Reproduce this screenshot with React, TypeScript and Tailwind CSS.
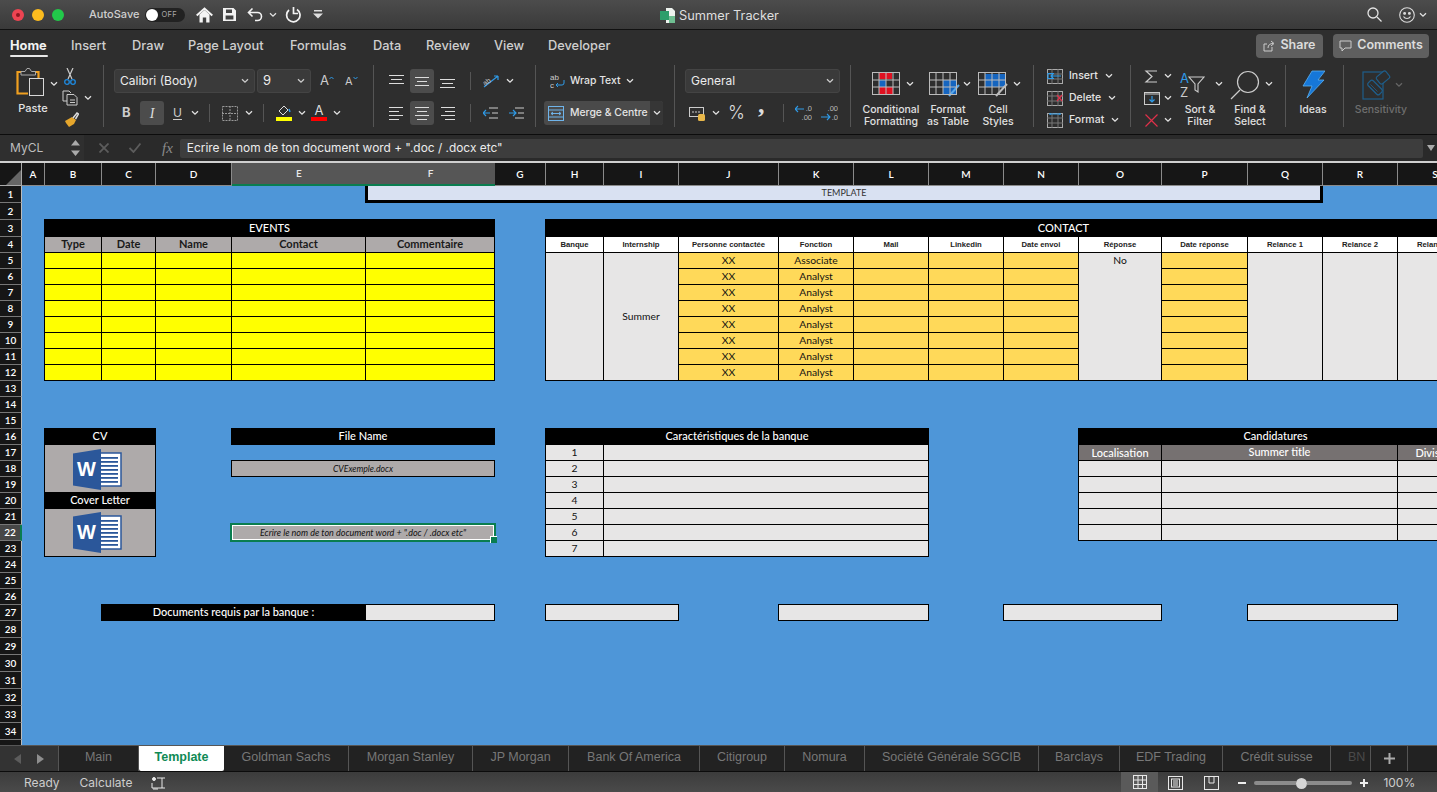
import React from "react";

const COL: Record<string, string> = {
  A: "col-start-2", B: "col-start-3", C: "col-start-4", D: "col-start-5", E: "col-start-6", F: "col-start-7", G: "col-start-8",
  H: "col-start-9", I: "col-start-10", J: "col-start-11", K: "col-start-12", L: "col-start-13", M: "col-start-14", N: "col-start-15",
  O: "col-start-16", P: "col-start-17", Q: "col-start-18", R: "col-start-19", S: "col-start-20", T: "col-start-21",
};
const ROW = ["row-start-1", "row-start-2", "row-start-3", "row-start-4", "row-start-5", "row-start-6", "row-start-7", "row-start-8", "row-start-9", "row-start-10", "row-start-11", "row-start-12", "row-start-13", "row-start-14", "row-start-15", "row-start-16", "row-start-17", "row-start-18", "row-start-19", "row-start-20", "row-start-21", "row-start-22", "row-start-23", "row-start-24", "row-start-25", "row-start-26", "row-start-27", "row-start-28", "row-start-29", "row-start-30", "row-start-31", "row-start-32", "row-start-33", "row-start-34", "row-start-35", "row-start-36"];
const CS = ["", "col-span-1", "col-span-2", "col-span-3", "col-span-4", "col-span-5", "col-span-6", "col-span-7", "col-span-8", "col-span-9", "col-span-10", "col-span-11", "col-span-12", "col-span-13"];
const RS = ["", "row-span-1", "row-span-2", "row-span-3", "row-span-4", "row-span-5", "row-span-6", "row-span-7", "row-span-8"];

const Cell = ({ c, r, cs = 1, rs = 1, className = "", children }: { c: string; r: number; cs?: number; rs?: number; className?: string; children?: React.ReactNode }) => (
  <div className={`${COL[c]} ${ROW[r]} ${CS[cs]} ${RS[rs]} -ml-px -mt-px border border-black flex items-center justify-center overflow-hidden whitespace-nowrap min-w-0 ${className}`}>{children}</div>
);

const Chev = ({ className = "", color = "#e2e2e2" }: { className?: string; color?: string }) => (
  <svg width="8" height="6" viewBox="0 0 8 6" className={`shrink-0 ${className}`} fill="none"><path d="M1 1.2l3 3 3-3" stroke={color} strokeWidth="1.3" /></svg>
);
const Lines = ({ rows, w = 16, h = 16, color = "#dcdcdc" }: { rows: number[][]; w?: number; h?: number; color?: string }) => (
  <svg width={w} height={h} viewBox={`0 0 ${w} ${h}`} className="shrink-0">
    {rows.map((l, i) => <rect key={i} x={l[0]} y={l[2]} width={l[1] - l[0]} height="1" fill={color} />)}
  </svg>
);

const WordIcon = () => (
  <svg width="49" height="41" viewBox="0 0 49 41" className="-translate-x-[3px]">
    <rect x="26" y="4" width="22" height="33" fill="#fff" stroke="#2b579a" strokeWidth="1.5" />
    {[8, 12, 16, 20, 24, 28, 32].map((y) => <rect key={y} x="28" y={y} width="17" height="1.8" fill="#2b579a" />)}
    <path d="M0 4.5L28 0v41L0 36.5z" fill="#2b579a" />
    <text x="13.5" y="27" textAnchor="middle" fontFamily="Liberation Sans" fontWeight="700" fontSize="20" fill="#fff">W</text>
  </svg>
);

const ColHead = () => {
  const cols = "ABCDEFGHIJKLMNOPQRST".split("");
  return (
    <>
      <div className="col-start-1 row-start-1 bg-[#161616] border-r border-b border-[#aaa] flex items-end justify-end relative z-10">
        <svg width="15" height="15" viewBox="0 0 15 15"><path d="M15 0v15H0z" fill="#666" /></svg>
      </div>
      {cols.map((l) => {
        const sel = l === "E" || l === "F";
        return (
          <div key={l} className={`${COL[l]} row-start-1 relative z-10 flex items-center justify-center text-[10px] font-semibold ${sel ? "bg-[#565656] text-[#e8e8e8] border-b-2 border-[#0a7d50]" : "bg-[#161616] text-white border-r border-b border-[#8a8a8a]"}`}>{l}</div>
        );
      })}
      {Array.from({ length: 35 }, (_, i) => i + 1).map((n) => (
        <div key={n} className={`col-start-1 ${ROW[n]} flex items-center justify-center text-[10px] font-semibold text-white border-b border-[#777] ${n === 22 ? "bg-[#474747] border-r-2 border-r-[#0a7d50]" : "bg-[#161616] border-r border-r-[#bbb]"}`}>{n}</div>
      ))}
    </>
  );
};

const Sheet = () => {
  const rows58 = [5, 6, 7, 8, 9, 10, 11, 12];
  const ev = ["B", "C", "D", "E", "F"];
  const evH = ["Type", "Date", "Name", "Contact", "Commentaire"];
  const ctH: [string, string][] = [["H", "Banque"], ["I", "Internship"], ["J", "Personne contactée"], ["K", "Fonction"], ["L", "Mail"], ["M", "Linkedin"], ["N", "Date envoi"], ["O", "Réponse"], ["P", "Date réponse"], ["Q", "Relance 1"], ["R", "Relance 2"], ["S", "Relance 3"]];
  const lg = "bg-[#e7e6e6]";
  const gold = "bg-[#ffd959]";
  const head = "bg-black text-white text-[11px] font-medium";
  return (
    <div className="grid h-[582px] overflow-hidden bg-[#4e96d8] font-[Lato,sans-serif] grid-cols-[22px_23px_57px_54px_76px_134px_129px_51px_58px_75px_100px_75px_75px_75px_75px_83px_86px_75px_75px_75px_109px] grid-rows-[23px_17px_17px_17px_repeat(24,16px)_repeat(8,17px)] text-[#111]">
      <ColHead />

      <div className={`${COL.F} row-start-2 col-span-12 -ml-px border-x-[3px] border-b-[3px] border-black bg-[#d9e1f2] flex items-center justify-center text-[9px] text-[#333]`}>TEMPLATE</div>

      <Cell c="B" r={3} cs={5} className={`${head} -ml-[2px]`}>EVENTS</Cell>
      {ev.map((c, i) => <Cell key={c} c={c} r={4} className="bg-[#aeaaaa] text-[11px] font-bold text-[#1a1a1a]">{evH[i]}</Cell>)}
      {rows58.map((r) => ev.map((c) => <Cell key={c + r} c={c} r={r} className="bg-[#ffff00]" />))}

      <Cell c="H" r={3} cs={13} className={head}>CONTACT</Cell>
      {ctH.map(([c, t]) => <Cell key={c} c={c} r={4} className="bg-white font-[Liberation_Sans,sans-serif] font-bold text-[7.7px] text-[#222]">{t}</Cell>)}
      <Cell c="H" r={5} rs={8} className={lg} />
      <Cell c="I" r={5} rs={8} className={`${lg} text-[10.3px]`}>Summer</Cell>
      {rows58.map((r) => (
        <React.Fragment key={r}>
          <Cell c="J" r={r} className={`${gold} text-[10.3px]`}>XX</Cell>
          <Cell c="K" r={r} className={`${gold} text-[10.3px]`}>{r === 5 ? "Associate" : "Analyst"}</Cell>
          <Cell c="L" r={r} className={gold} />
          <Cell c="M" r={r} className={gold} />
          <Cell c="N" r={r} className={gold} />
          <Cell c="P" r={r} className={gold} />
        </React.Fragment>
      ))}
      <Cell c="O" r={5} rs={8} className={`${lg} text-[10.3px] !items-start`}>No</Cell>
      <Cell c="Q" r={5} rs={8} className={lg} />
      <Cell c="R" r={5} rs={8} className={lg} />
      <Cell c="S" r={5} rs={8} className={lg} />

      <Cell c="B" r={16} cs={2} className={head}>CV</Cell>
      <Cell c="B" r={17} cs={2} rs={3} className="bg-[#aeaaaa] border-b-0"><WordIcon /></Cell>
      <Cell c="B" r={20} cs={2} className={head}>Cover Letter</Cell>
      <Cell c="B" r={21} cs={2} rs={3} className="bg-[#aeaaaa]"><WordIcon /></Cell>

      <Cell c="E" r={16} cs={2} className={head}>File Name</Cell>
      <Cell c="E" r={18} cs={2} className="bg-[#aeaaaa] italic text-[8.7px]">CVExemple.docx</Cell>
      <div className={`${COL.E} ${ROW[22]} col-span-2 -ml-[2px] -mt-[2px] -mr-px -mb-px border-2 border-[#0a7d50] relative z-[5]`}>
        <div className="h-full border border-white bg-[#aeaaaa] italic text-[9px] flex items-center justify-center whitespace-nowrap">Ecrire le nom de ton document word + ".doc / .docx etc"</div>
        <div className="absolute -right-[3px] -bottom-[3px] w-[7px] h-[7px] bg-[#0a7d50] border-t border-l border-white" />
      </div>

      <Cell c="H" r={16} cs={5} className={head}>Caractéristiques de la banque</Cell>
      {[1, 2, 3, 4, 5, 6, 7].map((n) => (
        <React.Fragment key={n}>
          <Cell c="H" r={16 + n} className={`${lg} text-[10.3px]`}>{n}</Cell>
          <Cell c="I" r={16 + n} cs={4} className={lg} />
        </React.Fragment>
      ))}

      <Cell c="O" r={16} cs={5} className={head}>Candidatures</Cell>
      <Cell c="O" r={17} className="bg-[#767171] text-white text-[11px] font-medium pt-px">Localisation</Cell>
      <Cell c="P" r={17} cs={3} className="bg-[#767171] text-white text-[11px] font-medium !items-start leading-[13px]">Summer title</Cell>
      <Cell c="S" r={17} className="bg-[#767171] text-white text-[11px] font-medium pt-px">Division</Cell>
      {[18, 19, 20, 21, 22].map((r) => (
        <React.Fragment key={r}>
          <Cell c="O" r={r} className={lg} />
          <Cell c="P" r={r} cs={3} className={lg} />
          <Cell c="S" r={r} className={lg} />
        </React.Fragment>
      ))}

      <Cell c="C" r={27} cs={3} className={head}>Documents requis par la banque :</Cell>
      <Cell c="F" r={27} className={lg} />
      <Cell c="H" r={27} cs={2} className={lg} />
      <Cell c="K" r={27} cs={2} className={lg} />
      <Cell c="N" r={27} cs={2} className={lg} />
      <Cell c="Q" r={27} cs={2} className={lg} />
    </div>
  );
};

const TitleBar = () => (
  <div className="h-[30px] flex items-center bg-gradient-to-b from-[#4c4c4c] to-[#3a3a3a] border-b border-[#111] relative">
    <div className="ml-[12px] flex gap-[8px]">
      <div className="w-[12px] h-[12px] rounded-full bg-[#ed4452] flex items-center justify-center"><div className="w-[4px] h-[4px] rounded-full bg-[#8e1620]" /></div>
      <div className="w-[12px] h-[12px] rounded-full bg-[#fdbc1e]" />
      <div className="w-[12px] h-[12px] rounded-full bg-[#22c94a]" />
    </div>
    <span className="ml-[25px] text-[11px] font-medium text-[#cfcfcf]">AutoSave</span>
    <div className="ml-[6px] w-[40px] h-[14px] rounded-full bg-[#222] flex items-center">
      <div className="w-[12px] h-[12px] rounded-full bg-white ml-px" />
      <span className="ml-[3px] text-[7.5px] tracking-wider text-[#aaa]">OFF</span>
    </div>
    <svg className="ml-[11px]" width="17" height="16" viewBox="0 0 17 16"><path d="M.7 8.500L8.500 1.500l7.800 7" fill="none" stroke="#f4f4f4" strokeWidth="2" /><path fillRule="evenodd" fill="#f4f4f4" d="M3.500 7.500L8.500 3l5 4.500V15.500h-3.300V10.500H6.800v5H3.500z" /></svg>
    <svg className="ml-[9px]" width="15" height="15" viewBox="0 0 15 15" fill="#f2f2f2"><path fillRule="evenodd" d="M1 1h10.500L14 3.500V14H1zM4 2.600V6h6V2.600zM3.600 8.500V12.600h7.800V8.500z" /></svg>
    <svg className="ml-[10px]" width="16" height="15" viewBox="0 0 16 15" fill="none" stroke="#f2f2f2" strokeWidth="1.600"><path d="M5.500 1.500L1.500 5.500l4 4M1.500 5.500h9a4 4 0 010 8H8" /></svg>
    <Chev className="ml-[6px]" />
    <svg className="ml-[7px]" width="17" height="17" viewBox="0 0 17 17" fill="none" stroke="#f2f2f2" strokeWidth="1.700"><path d="M5 4a6.700 6.700 0 108-.5" /><path d="M10.500 1v6.500H15" transform="translate(-1 0)" /></svg>
    <svg className="ml-[12px]" width="10" height="9" viewBox="0 0 10 9" fill="#ddd"><rect x="1" y="0" width="8" height="1.5" /><path d="M0 3.500h10L5 8.500z" /></svg>
    <div className="absolute left-[660px] top-[6px] flex items-center">
      <svg width="16" height="17" viewBox="0 0 16 17"><path d="M6 1h6l3 3v12H6z" fill="#eef3ef" /><rect x="9" y="9" width="6" height="7" fill="#6fbf92" /><rect x="0" y="4" width="9" height="9" fill="#2e9e6b" /></svg>
      <span className="ml-[3px] text-[12.8px] text-[#dedede]">Summer Tracker</span>
    </div>
    <svg className="ml-auto" width="15" height="15" viewBox="0 0 15 15" fill="none" stroke="#e4e4e4" strokeWidth="1.300"><circle cx="6" cy="6" r="5" /><path d="M10 10l4.500 4.500" /></svg>
    <svg className="ml-[17px]" width="16" height="16" viewBox="0 0 16 16" fill="none" stroke="#dcdcdc" strokeWidth="1.100"><circle cx="8" cy="8" r="7.300" /><circle cx="5.600" cy="6.400" r=".9" fill="#dcdcdc" /><circle cx="10.400" cy="6.400" r=".9" fill="#dcdcdc" /><path d="M4.500 9.500a4 4 0 007 0" /></svg>
    <Chev className="ml-[4px] mr-[10px]" />
  </div>
);

const tabs = [
  { t: "Insert", c: "w-[61px]" }, { t: "Draw", c: "w-[56px]" }, { t: "Page Layout", c: "w-[102px]" }, { t: "Formulas", c: "w-[83px]" },
  { t: "Data", c: "w-[53px]" }, { t: "Review", c: "w-[68px]" }, { t: "View", c: "w-[54px]" }, { t: "Developer", c: "w-[80px]" },
];

const TabRow = () => (
  <div className="h-[31px] flex items-center pl-[10px] pr-[8px] bg-[#2e2e2e] text-[12.8px] font-medium text-[#cfcfcf]">
    <div className="w-[61px] h-full relative flex items-center">
      <span className="font-bold text-[#f2f2f2]">Home</span>
      <div className="absolute left-0 top-[25px] w-[38px] h-[2px] rounded bg-[#e8e8e8]" />
    </div>
    {tabs.map((x) => <div key={x.t} className={`${x.c} shrink-0`}>{x.t}</div>)}
    <div className="ml-auto flex items-center gap-[10px] text-[#dcdcdc] font-semibold text-[12.5px]">
      <div className="w-[67px] h-[24px] rounded bg-[#5f5f5f] flex items-center justify-center gap-[5px]">
        <svg width="12" height="12" viewBox="0 0 12 12" fill="none" stroke="#ccc"><path d="M9 7v4H1V4h3M5 8c0-3 2-4.500 5-4.500M8 1l3 2.500L8 6" /></svg>Share
      </div>
      <div className="w-[96px] h-[24px] rounded bg-[#5f5f5f] flex items-center justify-center gap-[5px]">
        <svg width="13" height="12" viewBox="0 0 13 12" fill="none" stroke="#ccc"><path d="M1 1h11v7H6l-3 3V8H1z" /></svg>Comments
      </div>
    </div>
  </div>
);

const Drop = ({ label, className = "" }: { label: string; className?: string }) => (
  <div className={`h-[24px] rounded-[3px] bg-[#3a3a3a] border border-[#444] flex items-center pl-[5px] pr-[5px] justify-between text-[12px] text-[#ececec] ${className}`}>
    <span>{label}</span><Chev color="#ccc" />
  </div>
);

const GridIcon = ({ children, className = "" }: { children?: React.ReactNode; className?: string }) => (
  <svg width="32" height="26" viewBox="0 0 32 26" fill="none" className={`shrink-0 ${className}`}>
    {children}
    <g stroke="#bbb" strokeWidth="1"><rect x="0.5" y="0.500" width="27" height="22" /><path d="M0 8h28M0 15h28M7 0v23M14 0v23M21 0v23" /></g>
  </svg>
);

const Sep = () => <div className="w-px h-[18px] bg-[#555] shrink-0" />;

const Group = ({ w, children, last }: { w: string; children: React.ReactNode; last?: boolean }) => (
  <div className={`${w} shrink-0 h-[62px] flex items-start ${last ? "" : "border-r border-[#555]"}`}>{children}</div>
);

const Big = ({ lines, className = "", children }: { lines: string[]; className?: string; children: React.ReactNode }) => (
  <div className={`flex flex-col items-center shrink-0 ${className}`}>
    <div className="h-[39px] flex items-center">{children}</div>
    <div className="text-center text-[10.5px] leading-[12px] font-medium text-[#e0e0e0] whitespace-nowrap">{lines.map((l) => <div key={l}>{l}</div>)}</div>
  </div>
);

const Ribbon = () => (
  <div className="h-[74px] pt-[4px] flex bg-[#2e2e2e] border-b border-[#0c0c0c] text-[#e4e4e4]">
    <Group w="w-[104px]">
      <div className="ml-[16px] w-[34px] flex flex-col items-start">
        <svg className="mt-[2px]" width="30" height="30" viewBox="0 0 30 30" fill="none">
          <path d="M5 5H1.500v21.500H12M19 5h3.500v6" stroke="#f0a020" strokeWidth="2.200" />
          <path d="M5 8V4.500h4L11 1.500h2.500l2 3h4V8z" stroke="#aaa" />
          <rect x="13.500" y="11.500" width="14" height="17" stroke="#d8d8d8" />
        </svg>
        <span className="mt-[3px] text-[11px] font-medium w-[34px] text-center">Paste</span>
      </div>
      <Chev className="mt-[16px]" />
      <div className="ml-[4px] flex flex-col">
        <div className="h-[22px] flex items-center pl-[2px]">
          <svg width="12" height="17" viewBox="0 0 12 17" fill="none"><path d="M3 0l5 11M9 0L4 11" stroke="#ccc" strokeWidth="1.2" /><circle cx="3" cy="14" r="2.300" stroke="#1e8ae0" strokeWidth="1.300" /><circle cx="9" cy="14" r="2.300" stroke="#1e8ae0" strokeWidth="1.300" /></svg>
        </div>
        <div className="h-[22px] flex items-center">
          <svg width="17" height="16" viewBox="0 0 17 16" fill="none" stroke="#ccc"><path d="M5 11H1V1h6l2 2" /><path d="M5 4.500h7l3 3V15H5z" /><path d="M8 10h5M8 12.500h5" /></svg>
          <Chev className="ml-[5px]" />
        </div>
        <div className="h-[22px] flex items-center">
          <svg width="17" height="16" viewBox="0 0 17 16" fill="none"><path d="M10 5l-7 4 1 2 3 4 5-3 2-4z" fill="#e5a62c" /><path d="M11 6l4-5 1.500 1-3 5" stroke="#ddd" strokeWidth="1.500" /></svg>
        </div>
      </div>
    </Group>

    <Group w="w-[270px]">
      <div className="pl-[10px] pt-[4px] flex flex-col gap-[8px]">
        <div className="h-[24px] flex items-center">
          <Drop label="Calibri (Body)" className="w-[141px]" />
          <Drop label="9" className="w-[54px] ml-[2px] text-[13px]" />
          <span className="ml-[9px] text-[13px] text-[#ccc]">A</span>
          <svg className="mb-[6px]" width="5" height="4" viewBox="0 0 5 4" fill="none" stroke="#2f9be8"><path d="M.5 3l2-2 2 2" /></svg>
          <span className="ml-[11px] text-[11px] text-[#ccc]">A</span>
          <svg className="mb-[6px]" width="5" height="4" viewBox="0 0 5 4" fill="none" stroke="#2f9be8"><path d="M.5 1l2 2 2-2" /></svg>
        </div>
        <div className="h-[24px] flex items-center">
          <span className="ml-[8px] w-[18px] text-[13px] font-bold text-[#ccc]">B</span>
          <div className="w-[24px] h-[24px] rounded-[3px] bg-[#4c4c4c] flex items-center justify-center text-[14px] italic font-[Liberation_Serif,serif] text-[#ddd]">I</div>
          <span className="ml-[9px] text-[12px] underline underline-offset-2 text-[#ccc]">U</span>
          <Chev className="ml-[9px]" />
          <div className="ml-[10px]"><Sep /></div>
          <svg className="ml-[12px]" width="16" height="15" viewBox="0 0 16 15" fill="none" stroke="#999" strokeDasharray="2 1"><rect x=".5" y=".5" width="15" height="14" /><path d="M0 7.500h16M8 0v15" /></svg>
          <Chev className="ml-[7px]" />
          <div className="ml-[10px]"><Sep /></div>
          <div className="ml-[12px] w-[16px] flex flex-col items-center">
            <svg width="14" height="11" viewBox="0 0 14 11" fill="none"><path d="M2 6l5-5 4 4-5 5z" stroke="#ddd" /><path d="M12 4l1 3" stroke="#2f9be8" strokeWidth="1.500" /></svg>
            <div className="w-[16px] h-[4px] mt-px bg-[#ffff00]" />
          </div>
          <Chev className="ml-[6px]" />
          <div className="ml-[5px] w-[16px] flex flex-col items-center">
            <span className="text-[13px] leading-[11px] text-[#ddd]">A</span>
            <div className="w-[16px] h-[4px] mt-[1px] bg-[#ff0000]" />
          </div>
          <Chev className="ml-[6px]" />
        </div>
      </div>
    </Group>

    <Group w="w-[162px]">
      <div className="pl-[15px] pt-[4px] flex flex-col gap-[8px]">
        <div className="h-[24px] flex items-center">
          <Lines rows={[[0, 15, 2], [2, 13, 6], [0, 15, 10]]} />
          <div className="ml-[5px] w-[24px] h-[24px] rounded-[3px] bg-[#4c4c4c] flex items-center justify-center"><Lines rows={[[1, 15, 4], [3, 13, 8], [1, 15, 12]]} /></div>
          <div className="ml-[6px]"><Lines rows={[[0, 15, 6], [2, 13, 10], [0, 15, 14]]} /></div>
          <div className="ml-[14px]"><Sep /></div>
          <svg className="ml-[11px] overflow-visible" width="18" height="15" viewBox="0 0 18 15" fill="none"><path d="M2 13L16 2M16 2h-4M16 2v4" stroke="#2f9be8" strokeWidth="1.200" /><text x="1" y="10" fontSize="7" fontFamily="Liberation Sans" fill="#ccc" transform="rotate(-38 5 8)">ab</text></svg>
          <Chev className="ml-[6px]" />
        </div>
        <div className="h-[24px] flex items-center">
          <Lines rows={[[0, 14, 2], [0, 10, 6], [0, 14, 10], [0, 10, 14]]} />
          <div className="ml-[5px] w-[24px] h-[24px] rounded-[3px] bg-[#4c4c4c] flex items-center justify-center"><Lines rows={[[1, 15, 2], [3, 13, 6], [1, 15, 10], [3, 13, 14]]} /></div>
          <div className="ml-[6px]"><Lines rows={[[1, 15, 2], [5, 15, 6], [1, 15, 10], [5, 15, 14]]} /></div>
          <div className="ml-[14px]"><Sep /></div>
          <svg className="ml-[12px]" width="15" height="14" viewBox="0 0 15 14" fill="none"><path d="M6 2h9M6 12h9M9 7h6" stroke="#ccc" /><path d="M0 7h7M3 4L0 7l3 3" stroke="#2f9be8" strokeWidth="1.200" /></svg>
          <svg className="ml-[11px]" width="15" height="14" viewBox="0 0 15 14" fill="none"><path d="M6 2h9M6 12h9M9 7h6" stroke="#ccc" /><path d="M0 7h7M4 4l3 3-3 3" stroke="#2f9be8" strokeWidth="1.200" /></svg>
        </div>
      </div>
    </Group>

    <Group w="w-[139px]">
      <div className="pl-[8px] pt-[4px] flex flex-col gap-[8px] text-[10.4px] font-medium">
        <div className="h-[24px] flex items-center pl-[6px]">
          <svg width="16" height="16" viewBox="0 0 16 16" fill="none"><text x="0" y="7" fontSize="8" fontFamily="Liberation Sans" fill="#ccc">ab</text><text x="0" y="15" fontSize="8" fontFamily="Liberation Sans" fill="#ccc">c</text><path d="M14 7v3a2 2 0 01-2 2H6M8 10l-2 2 2 2" stroke="#2f9be8" /></svg>
          <span className="ml-[4px]">Wrap Text</span>
          <Chev className="ml-[5px]" />
        </div>
        <div className="h-[24px] w-[119px] flex items-center rounded-[3px] bg-[#4a4a4a] overflow-hidden pl-[4px]">
          <svg className="shrink-0" width="16" height="15" viewBox="0 0 16 15" fill="none" stroke="#6fb4ea"><rect x=".5" y=".5" width="15" height="14" /><path d="M0 4h16M0 11h16" /><path d="M3 7.500h10M5 6l-2 1.500L5 9M11 6l2 1.500L11 9" /></svg>
          <span className="ml-[6px] w-[80px] shrink-0 whitespace-nowrap">Merge &amp; Centre</span>
          <div className="h-full w-[13px] shrink-0 bg-[#363636] flex items-center justify-center"><Chev /></div>
        </div>
      </div>
    </Group>

    <Group w="w-[176px]">
      <div className="pl-[10px] pt-[4px] flex flex-col gap-[8px]">
        <Drop label="General" className="w-[155px]" />
        <div className="h-[24px] flex items-center">
          <svg className="ml-[4px]" width="17" height="17" viewBox="0 0 17 17" fill="none"><rect x=".5" y="2.500" width="14" height="9" stroke="#ccc" /><path d="M3 7h8" stroke="#ccc" strokeDasharray="2 1" /><rect x="9" y="9" width="7" height="7" rx="1.500" fill="#e8b74a" /></svg>
          <Chev className="ml-[6px]" />
          <span className="ml-[8px] w-[18px] text-[18px] leading-none font-light text-[#ddd]">%</span>
          <span className="ml-[12px] w-[10px] text-[26px] leading-none font-bold font-[Liberation_Serif,serif] text-[#ddd] -mt-[16px]">,</span>
          <div className="ml-[15px]"><Sep /></div>
          <svg className="ml-[11px]" width="17" height="18" viewBox="0 0 17 18" fill="none"><text x="17" y="7" textAnchor="end" fontSize="7.500" fontFamily="Liberation Sans" fill="#bbb">.0</text><text x="17" y="16" textAnchor="end" fontSize="7.500" fontFamily="Liberation Sans" fill="#bbb">.00</text><path d="M0 5h9M3 2L0 5l3 3" stroke="#2f9be8" strokeWidth="1.100" /></svg>
          <svg className="ml-[9px]" width="17" height="18" viewBox="0 0 17 18" fill="none"><text x="17" y="7" textAnchor="end" fontSize="7.500" fontFamily="Liberation Sans" fill="#bbb">.00</text><text x="17" y="16" textAnchor="end" fontSize="7.500" fontFamily="Liberation Sans" fill="#bbb">.0</text><path d="M0 13h9M6 10l3 3-3 3" stroke="#2f9be8" strokeWidth="1.100" /></svg>
        </div>
      </div>
    </Group>

    <Group w="w-[183px]">
      <Big lines={["Conditional", "Formatting"]} className="ml-[11px] w-[58px]">
        <GridIcon className="-translate-x-[3px]"><rect x="7" y="0" width="13" height="7" fill="#e01020" /><rect x="7" y="8" width="7" height="7" fill="#1565c0" /><rect x="7" y="15" width="14" height="7" fill="#e01020" /></GridIcon>
      </Big>
      <Chev className="mt-[16px] -ml-[14px]" />
      <Big lines={["Format", "as Table"]} className="ml-[9px] w-[50px]">
        <GridIcon className="-translate-x-[3px]"><rect x="14" y="8" width="14" height="15" fill="#1565c0" /><path d="M20 24l10-11" stroke="#5aa7e8" strokeWidth="2" /></GridIcon>
      </Big>
      <Chev className="mt-[16px] -ml-[10px]" />
      <Big lines={["Cell", "Styles"]} className="ml-[8px] w-[38px]">
        <GridIcon className="-translate-x-[4px]"><rect x="7" y="2" width="21" height="13" fill="#1565c0" /><path d="M18 24l11-12" stroke="#bbb" strokeWidth="2" /></GridIcon>
      </Big>
      <Chev className="mt-[16px] -ml-[4px]" />
    </Group>

    <Group w="w-[97px]">
      <div className="pl-[13px] flex flex-col text-[10.5px] font-medium">
        {[
          { t: "Insert", c: "#2f9be8", d: "M7 4.500H1v5h6M4 7h10M6 5L4 7l2 2" },
          { t: "Delete", c: "#e0304a", d: "M10 4l5 6M15 4l-5 6" },
          { t: "Format", c: "#2f9be8", d: "M3 1h10M3 0v2M13 0v2" },
        ].map((r) => (
          <div key={r.t} className="h-[22px] flex items-center">
            <svg width="16" height="15" viewBox="0 0 16 15" fill="none"><rect x=".5" y=".5" width="15" height="14" stroke="#aaa" /><path d="M0 5h16M0 10h16M5 0v15M11 0v15" stroke="#777" /><path d={r.d} stroke={r.c} strokeWidth="1.200" /></svg>
            <span className="ml-[6px]">{r.t}</span>
            <Chev className="ml-[7px]" />
          </div>
        ))}
      </div>
    </Group>

    <Group w="w-[155px]">
      <div className="pl-[13px] flex flex-col w-[42px] shrink-0">
        <div className="h-[22px] flex items-center">
          <svg width="15" height="15" viewBox="0 0 15 15" fill="none" stroke="#ccc" strokeWidth="1.200"><path d="M13 2H2l6 5.500L2 13h11" /></svg>
          <Chev className="ml-[5px]" />
        </div>
        <div className="h-[22px] flex items-center">
          <svg width="16" height="14" viewBox="0 0 16 14" fill="none"><rect x=".5" y="1.500" width="15" height="12" stroke="#ccc" /><path d="M0 3h16" stroke="#ccc" /><path d="M8 5v6M5.500 8.500L8 11l2.500-2.500" stroke="#2f9be8" strokeWidth="1.200" /></svg>
          <Chev className="ml-[4px]" />
        </div>
        <div className="h-[22px] flex items-center">
          <svg className="ml-[1px]" width="13" height="13" viewBox="0 0 13 13" fill="none" stroke="#e0304a" strokeWidth="1.200"><path d="M.5.5l12 12M12.500.5l-12 12" /></svg>
          <Chev className="ml-[6px]" />
        </div>
      </div>
      <Big lines={["Sort &", "Filter"]} className="ml-[7px] w-[40px]">
        <div className="flex items-center w-[30px] text-[13px] leading-[14px] -translate-x-[5px]">
          <div className="flex flex-col"><span className="text-[#2f9be8]">A</span><span className="text-[#ccc]">Z</span></div>
          <svg className="-ml-[1px]" width="17" height="18" viewBox="0 0 17 18" fill="none" stroke="#ccc" strokeWidth="1.100"><path d="M1 1h15l-6 7v8l-3-2V8z" /></svg>
        </div>
      </Big>
      <Chev className="mt-[16px] -ml-[5px]" />
      <Big lines={["Find &", "Select"]} className="ml-[9px] w-[36px]">
        <svg className="-translate-x-[5px]" width="30" height="30" viewBox="0 0 30 30" fill="none" stroke="#ccc" strokeWidth="1.200"><circle cx="18" cy="12" r="10.500" /><path d="M10 20L1 29" /></svg>
      </Big>
      <Chev className="mt-[16px] -ml-[3px]" />
    </Group>

    <Group w="w-[58px]">
      <Big lines={["Ideas"]} className="w-[54px]">
        <svg width="23" height="29" viewBox="0 0 23 29" fill="#1677d8" stroke="#5ab0f0" strokeWidth=".8"><path d="M10 1h13l-7 9h6L5 28l5-12H1z" /></svg>
      </Big>
    </Group>

    <Group w="w-[90px]" last>
      <div className="flex flex-col items-center w-[74px]">
        <div className="h-[39px] flex items-center ml-[2px]">
          <svg width="30" height="30" viewBox="0 0 30 30" fill="none" stroke="#1f5e8a" strokeWidth="1.200">
            <rect x="1" y="2" width="20" height="27" />
            <rect x="5" y="14" width="16" height="7" rx="2" transform="rotate(45 13 17.500)" fill="#2e2e2e" />
            <path d="M8.500 14.500l7 7M7 16l7 7" strokeWidth=".8" />
            <rect x="15" y="3" width="12" height="9" rx="2" transform="rotate(-40 21 7.500)" fill="#2e2e2e" />
          </svg>
          <Chev color="#666" className="ml-[3px]" />
        </div>
        <div className="text-[10.5px] leading-[12px] font-medium text-[#6f6f6f]">Sensitivity</div>
      </div>
    </Group>
  </div>
);

const FormulaBar = () => (
  <div className="h-[28px] flex items-start bg-[#2a2a2a] border-b-[2px] border-[#cfcfcf]">
    <div className="w-[84px] h-[26px] flex items-center justify-between pl-[10px] pr-[3px] bg-[#2f2f2f] text-[12px] text-[#bdbdbd] shrink-0">
      <span>MyCL</span>
      <svg className="mr-[1px]" width="9" height="18" viewBox="0 0 9 18" fill="#aaa"><path d="M4.500 1L9 6.500H0zM4.500 17L0 11.500h9z" /></svg>
    </div>
    <div className="h-[26px] flex items-center">
      <svg className="ml-[15px]" width="10" height="10" viewBox="0 0 10 10" fill="none" stroke="#5c5c5c" strokeWidth="1.800"><path d="M.5.5l9 9M9.500.5l-9 9" /></svg>
      <svg className="ml-[20px]" width="12" height="10" viewBox="0 0 12 10" fill="none" stroke="#5c5c5c" strokeWidth="1.800"><path d="M.5 5l4 4 7-8.500" /></svg>
      <span className="ml-[21px] text-[15px] italic font-[Liberation_Serif,serif] text-[#8a8a8a]">fx</span>
      <div className="ml-[7px] w-[1243px] h-[19px] rounded-[2px] bg-[#3d3d3d] flex items-center pl-[7px] text-[11.9px] text-[#ececec] whitespace-nowrap">Ecrire le nom de ton document word + ".doc / .docx etc"</div>
      <svg className="ml-[4px]" width="8" height="6" viewBox="0 0 8 6" fill="#aaa"><path d="M0 0h8L4 6z" /></svg>
    </div>
  </div>
);

const sheetTabs = [
  { t: "Main", c: "w-[80px]" }, { t: "Template", c: "w-[85px]", a: true }, { t: "Goldman Sachs", c: "w-[125px]" }, { t: "Morgan Stanley", c: "w-[124px]" },
  { t: "JP Morgan", c: "w-[96px]" }, { t: "Bank Of America", c: "w-[131px]" }, { t: "Citigroup", c: "w-[85px]" }, { t: "Nomura", c: "w-[80px]" },
  { t: "Société Générale SGCIB", c: "w-[174px]" }, { t: "Barclays", c: "w-[81px]" }, { t: "EDF Trading", c: "w-[103px]" }, { t: "Crédit suisse", c: "w-[108px]" },
];

const SheetTabs = () => (
  <div className="h-[27px] flex bg-[#222] border-t border-[#565656] border-b border-b-[#0c0c0c] font-[Liberation_Sans,sans-serif] text-[12.5px] text-[#777]">
    <div className="w-[59px] h-full bg-[#333] flex items-center border-r border-[#555]">
      <svg className="ml-[14px]" width="7" height="10" viewBox="0 0 7 10" fill="#5c5c5c"><path d="M7 0v10L0 5z" /></svg>
      <svg className="ml-[16px]" width="7" height="10" viewBox="0 0 7 10" fill="#8e8e8e"><path d="M0 0v10l7-5z" /></svg>
    </div>
    {sheetTabs.map((x) => (
      <div key={x.t} className={`${x.c} shrink-0 flex items-center justify-center pb-[3px] ${x.a ? "bg-white text-[#0f8a55] font-bold rounded-b-[2px]" : "border-r border-[#555]"}`}>{x.t}</div>
    ))}
    <div className="w-[40px] shrink-0 flex items-center pl-[17px] pb-[3px] border-r border-[#555] text-[#4a4a4a]">BN</div>
    <div className="w-[37px] shrink-0 flex items-center justify-center border-r border-[#555]">
      <svg width="11" height="11" viewBox="0 0 11 11" fill="#aaa"><path d="M4.500 0h2v4.500H11v2H6.500V11h-2V6.500H0v-2h4.500z" /></svg>
    </div>
  </div>
);

const StatusBar = () => (
  <div className="h-[20px] flex items-center pt-[2px] bg-gradient-to-b from-[#3c3c3c] to-[#4a4a4a] text-[12px] text-[#cdcdcd]">
    <span className="ml-[24px]">Ready</span>
    <span className="ml-[20px]">Calculate</span>
    <svg className="ml-[19px]" width="15" height="15" viewBox="0 0 15 15" fill="none" stroke="#e8e8e8"><circle cx="3" cy="3" r="1.500" fill="#e8e8e8" /><path d="M6 2h8M11 2v10M1 7v5h13M2 13h5" /></svg>
    <div className="ml-[955px] w-[37px] h-[20px] -mt-[2px] bg-[#5a5a5a] flex items-center justify-center">
      <svg width="14" height="14" viewBox="0 0 14 14" fill="none" stroke="#e8e8e8"><rect x=".5" y=".5" width="13" height="13" /><path d="M0 5h14M0 9.500h14M5 0v14M9.500 0v14" /></svg>
    </div>
    <svg className="ml-[10px]" width="15" height="14" viewBox="0 0 15 14" fill="none" stroke="#e8e8e8"><rect x=".5" y=".5" width="14" height="13" /><rect x="3.500" y="3" width="8" height="8" /><path d="M5 5h5M5 7h5M5 9h5" /></svg>
    <svg className="ml-[21px]" width="15" height="14" viewBox="0 0 15 14" fill="none" stroke="#e8e8e8"><rect x=".5" y=".5" width="14" height="13" /><path d="M5 0v7h5V0" /></svg>
    <div className="ml-[19px] w-[8px] h-[2px] bg-[#eee]" />
    <div className="ml-[8px] w-[98px] flex items-center">
      <div className="w-[42px] h-[4px] rounded-l bg-[#8c8c8c]" />
      <div className="w-[11px] h-[11px] rounded-full bg-[#d6d6d6]" />
      <div className="w-[45px] h-[4px] rounded-r bg-[#8c8c8c]" />
    </div>
    <svg className="ml-[8px]" width="8" height="8" viewBox="0 0 8 8" fill="#eee"><path d="M3 0h2v3h3v2H5v3H3V5H0V3h3z" /></svg>
    <span className="ml-[15px]">100%</span>
  </div>
);

export default function App() {
  return (
    <div className="w-[1437px] h-[792px] overflow-hidden bg-[#2e2e2e] font-[Inter,sans-serif]">
      <TitleBar />
      <TabRow />
      <Ribbon />
      <FormulaBar />
      <Sheet />
      <SheetTabs />
      <StatusBar />
    </div>
  );
}
